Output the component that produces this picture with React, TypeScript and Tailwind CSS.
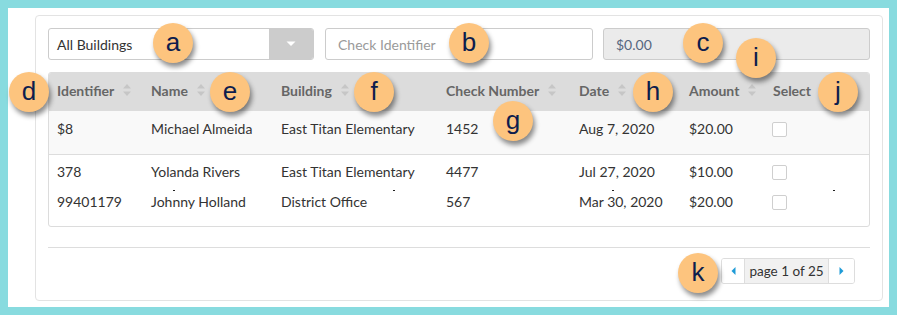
import React from "react";

const font = { fontFamily: "Lato, 'Open Sans', Arial, sans-serif" };

function SortIcon() {
  return (
    <svg width="10" height="16" viewBox="0 0 10 16" className="ml-[8px] shrink-0">
      <path d="M1 6.5 L5 2 L9 6.5 Z" fill="#c6c6c6" />
      <path d="M1 9.5 L5 14 L9 9.5 Z" fill="#c6c6c6" />
    </svg>
  );
}

function Bubble({ l, x, y }: { l: string; x: number; y: number }) {
  return (
    <div
      className="absolute w-[40px] h-[40px] rounded-full bg-[#fdc47e] flex items-center justify-center text-[26px] text-[#0e1d4d] shadow-[2px_4px_5px_rgba(0,0,0,0.45)]"
      style={{ left: x - 20, top: y - 20, fontFamily: "Arial, 'Liberation Sans', sans-serif", lineHeight: "1" }}
    >
      <span className="-mt-[3px]">{l}</span>
    </div>
  );
}

function Check() {
  return <div className="w-[15px] h-[15px] border border-[#cfcfcf] rounded-[2px] bg-white translate-y-[1px]" />;
}

const cols = "grid grid-cols-[94px_130px_165px_133px_110px_84px_1fr] pl-[8px] items-center";

const rows = [
  ["$8", "Michael Almeida", "East Titan Elementary", "1452", "Aug 7, 2020", "$20.00"],
  ["378", "Yolanda Rivers", "East Titan Elementary", "4477", "Jul 27, 2020", "$10.00"],
  ["99401179", "Johnny Holland", "District Office", "567", "Mar 30, 2020", "$20.00"],
];

function Row({ r }: { r: string[] }) {
  return (
    <div className={`${cols} h-[30px] text-[14px] text-[#333]`}>
      {r.map((c, i) => (
        <div key={i}>{c}</div>
      ))}
      <div className="-ml-[1px]">
        <Check />
      </div>
    </div>
  );
}

export default function App() {
  const headers = ["Identifier", "Name", "Building", "Check Number", "Date", "Amount"];
  return (
    <div className="relative w-[897px] h-[315px] bg-[#88dbdf] p-2" style={font}>
      <div className="h-full bg-white pl-[27px] pr-[6px] pt-[7px] pb-[6px]">
        <div className="h-full border border-[#e3e3e3] rounded-[4px] px-3 pt-3">
          {/* controls */}
          <div className="flex gap-[11px] h-[32px]">
            <div className="w-[266px] flex border border-[#cccccc] rounded-[3px] overflow-hidden">
              <div className="flex-1 flex items-center pl-[8px] text-[14px] text-[#333]">All Buildings</div>
              <div className="w-[44px] bg-[#cccccc] flex items-center justify-center">
                <svg width="10" height="6" viewBox="0 0 10 6">
                  <path d="M0.5 0.5 L9.5 0.5 L5 5 Z" fill="#ffffff" />
                </svg>
              </div>
            </div>
            <div className="w-[268px] flex items-center border border-[#cccccc] rounded-[3px] pl-[12px] text-[14px] text-[#9a9a9a]">
              Check Identifier
            </div>
            <div className="flex-1 ml-[-1px] flex items-center border border-[#cccccc] rounded-[3px] bg-[#ebebeb] pl-[12px] text-[14px] text-[#56667f]">
              $0.00
            </div>
          </div>

          {/* table */}
          <div className="mt-[12px] border border-[#dcdcdc] rounded-[3px] overflow-hidden">
            <div className={`${cols} h-[38px] pb-[4px] bg-[#dcdcdc] text-[14px] font-bold text-[#666666]`}>
              {headers.map((h) => (
                <div key={h} className="flex items-center">
                  {h}
                  <SortIcon />
                </div>
              ))}
              <div>Select</div>
            </div>
            <div className="bg-[#f9f9f9] pt-[2px] pb-[11px] border-b border-[#dddddd]">
              <Row r={rows[0]} />
            </div>
            <div className="relative pt-[1px] pb-[10px]">
              <Row r={rows[1]} />
              <Row r={rows[2]} />
              <div className="absolute w-[2px] h-[1px] bg-[#222]" style={{ left: 124, top: 35 }} />
              <div className="absolute w-[2px] h-[1px] bg-[#222]" style={{ left: 344, top: 35 }} />
              <div className="absolute w-[2px] h-[1px] bg-[#222]" style={{ left: 563, top: 35 }} />
              <div className="absolute w-[2px] h-[1px] bg-[#222]" style={{ left: 784, top: 35 }} />
            </div>
          </div>

          <div className="mt-[20px] border-t border-[#dddddd]" />

          <div className="flex justify-end mt-[10px] pr-[15px]">
            <div className="flex h-[26px] border border-[#dddddd] rounded-[3px] overflow-hidden text-[13.5px] text-[#333]">
              <div className="w-[22px] flex items-center justify-center bg-white">
                <svg width="5" height="8" viewBox="0 0 5 8">
                  <path d="M4.5 0 L4.5 8 L0.5 4 Z" fill="#1e9bd7" />
                </svg>
              </div>
              <div className="w-[85px] flex items-center justify-center bg-[#f1f1f1] border-x border-[#dddddd]">
                page 1 of 25
              </div>
              <div className="w-[25px] flex items-center justify-center bg-white">
                <svg width="5" height="8" viewBox="0 0 5 8">
                  <path d="M0.5 0 L0.5 8 L4.5 4 Z" fill="#1e9bd7" />
                </svg>
              </div>
            </div>
          </div>
        </div>
      </div>

      <Bubble l="a" x={173} y={43} />
      <Bubble l="b" x={469} y={43} />
      <Bubble l="c" x={703} y={43} />
      <Bubble l="d" x={29} y={92} />
      <Bubble l="e" x={230} y={92} />
      <Bubble l="f" x={374} y={92} />
      <Bubble l="g" x={513} y={121} />
      <Bubble l="h" x={653} y={92} />
      <Bubble l="i" x={756} y={58} />
      <Bubble l="j" x={838} y={92} />
      <Bubble l="k" x={698} y={273} />
    </div>
  );
}
